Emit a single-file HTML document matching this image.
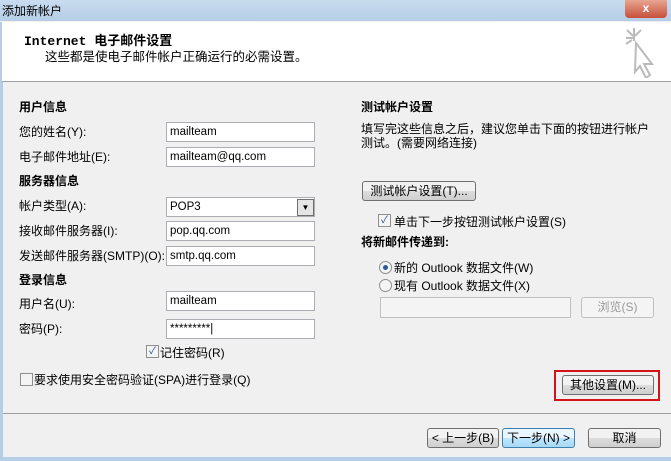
<!DOCTYPE html>
<html><head><meta charset="utf-8"><style>
body{margin:0;width:671px;height:461px;overflow:hidden;font-family:"Liberation Sans","Noto Sans CJK SC",sans-serif;font-size:12px;color:#000;position:relative;background:#f0f0f0}
.a{position:absolute;white-space:nowrap}
.title{left:0;top:0;width:671px;height:21px;background:linear-gradient(#c9dcef,#b5cde6)}
.hdr{left:2px;top:22px;width:669px;height:59px;background:#fff;border-bottom:1px solid #a0a0a0}
.inp{position:absolute;height:18px;border:1px solid #abadb3;background:#fff;line-height:19px;padding-left:3px;box-sizing:content-box;font-size:11.5px}
.btn{position:absolute;border:1px solid #707070;border-radius:3px;background:linear-gradient(#f2f2f2 50%,#dddddd 50%,#cfcfcf);text-align:center;line-height:18px}
.b{font-weight:bold}
.cb{position:absolute;width:11px;height:11px;border:1px solid #8e8f8f;background:#f4f4f4}
.rd{position:absolute;width:11px;height:11px;border:1px solid #8e8f8f;border-radius:50%;background:#f4f4f4}
</style></head><body>
<div class="a title"></div>
<div class="a" style="left:2px;top:2px;font-size:12px">添加新帐户</div>
<div class="a" style="left:625px;top:0;width:42px;height:18px;border-radius:0 0 4px 4px;background:linear-gradient(#e8a590,#c7503a);color:#fff;text-align:center;font-weight:bold;line-height:16px">x</div>
<div class="a" style="left:0;top:22px;width:3px;height:439px;background:#b5cde6"></div>
<div class="a hdr"></div>
<div class="a b" style="left:24px;top:30px;font-family:'Liberation Mono','Noto Sans CJK SC',monospace;font-size:13px">Internet 电子邮件设置</div>
<div class="a" style="left:45px;top:46px;font-size:12.5px">这些都是使电子邮件帐户正确运行的必需设置。</div>
<svg class="a" style="left:620px;top:26px" width="44" height="52"><g stroke="#bbb" stroke-width="2" fill="none"><path d="M14 2v13M6 12h8M7 4l6 6M21 4l-6 6M6 18l6-4"/><path d="M16 17l16 21h-8l6 11-4 3-6-12-5 6z" fill="#fff"/></g></svg>

<div class="a b" style="left:19px;top:98px">用户信息</div>
<div class="a" style="left:19px;top:123px">您的姓名(Y):</div>
<div class="inp" style="left:166px;top:122px;width:144px">mailteam</div>
<div class="a" style="left:19px;top:148px">电子邮件地址(E):</div>
<div class="inp" style="left:166px;top:147px;width:144px">mailteam@qq.com</div>
<div class="a b" style="left:19px;top:172px">服务器信息</div>
<div class="a" style="left:19px;top:197px">帐户类型(A):</div>
<div class="inp" style="left:166px;top:197px;width:144px">POP3</div>
<div class="a" style="left:297px;top:199px;width:15px;height:15px;border:1px solid #707070;background:#e5e5e5;font-size:8px;text-align:center;line-height:15px">▼</div>
<div class="a" style="left:19px;top:222px">接收邮件服务器(I):</div>
<div class="inp" style="left:166px;top:221px;width:144px">pop.qq.com</div>
<div class="a" style="left:19px;top:247px">发送邮件服务器(SMTP)(O):</div>
<div class="inp" style="left:166px;top:246px;width:144px">smtp.qq.com</div>
<div class="a b" style="left:19px;top:271px">登录信息</div>
<div class="a" style="left:19px;top:295px">用户名(U):</div>
<div class="inp" style="left:166px;top:291px;width:144px">mailteam</div>
<div class="a" style="left:19px;top:320px">密码(P):</div>
<div class="inp" style="left:166px;top:319px;width:144px">*********|</div>
<div class="cb" style="left:146px;top:345px;font-size:10px;line-height:11px;color:#2a4d8a;text-align:center">✓</div>
<div class="a" style="left:160px;top:344px">记住密码(R)</div>
<div class="cb" style="left:20px;top:373px"></div>
<div class="a" style="left:34px;top:371px">要求使用安全密码验证(SPA)进行登录(Q)</div>

<div class="a b" style="left:361px;top:98px">测试帐户设置</div>
<div class="a" style="left:361px;top:122px;line-height:14px">填写完这些信息之后，建议您单击下面的按钮进行帐户<br>测试。(需要网络连接)</div>
<div class="btn" style="left:362px;top:181px;width:112px">测试帐户设置(T)...</div>
<div class="cb" style="left:378px;top:214px;font-size:10px;line-height:11px;color:#2a4d8a;text-align:center">✓</div>
<div class="a" style="left:394px;top:213px">单击下一步按钮测试帐户设置(S)</div>
<div class="a b" style="left:361px;top:233px">将新邮件传递到:</div>
<div class="rd" style="left:379px;top:261px"><div style="margin:3px;width:5px;height:5px;border-radius:50%;background:#2a5a9a"></div></div>
<div class="a" style="left:394px;top:259px">新的 Outlook 数据文件(W)</div>
<div class="rd" style="left:379px;top:279px"></div>
<div class="a" style="left:394px;top:277px">现有 Outlook 数据文件(X)</div>
<div class="a" style="left:380px;top:297px;width:189px;height:19px;border:1px solid #c0c0c0;background:#f4f4f4"></div>
<div class="a" style="left:581px;top:297px;width:71px;height:19px;border:1px solid #c0c0c0;border-radius:3px;background:#f4f4f4;color:#999;text-align:center;line-height:19px">浏览(S)</div>
<div class="a" style="left:554px;top:370px;width:102px;height:27px;border:2px solid #d0141a"></div>
<div class="btn" style="left:562px;top:375px;width:90px">其他设置(M)...</div>
<div class="a" style="left:3px;top:413px;width:668px;height:1px;background:#a0a0a0"></div>
<div class="btn" style="left:427px;top:428px;width:70px">&lt; 上一步(B)</div>
<div class="btn" style="left:502px;top:428px;width:71px;border-color:#3c7fb1;background:linear-gradient(#eaf6fd 50%,#bee6fd 50%,#a7d9f5)">下一步(N) &gt;</div>
<div class="btn" style="left:588px;top:428px;width:71px">取消</div>
<div class="a" style="left:0;top:457px;width:671px;height:4px;background:#b5cde6"></div>
</body></html>
